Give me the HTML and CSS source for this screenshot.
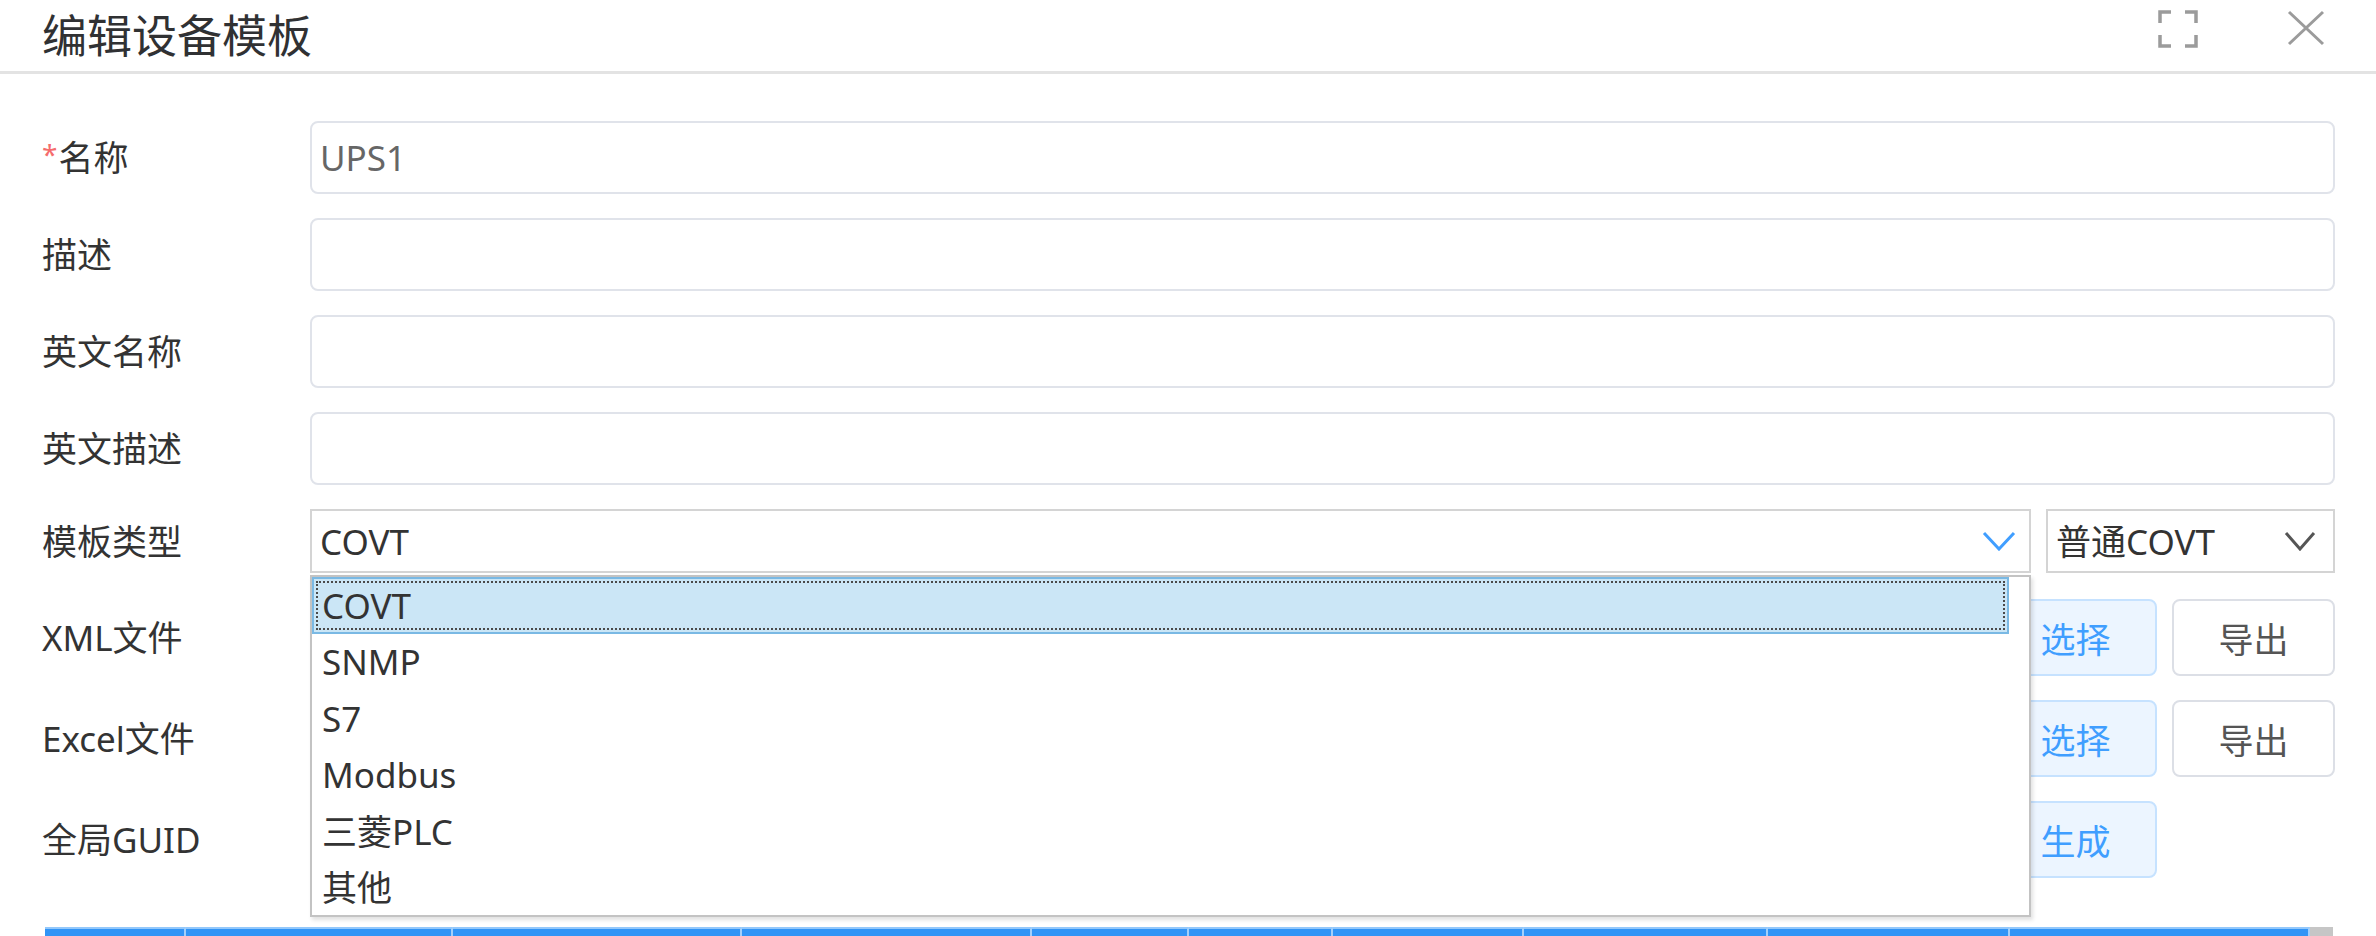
FILE: index.html
```html
<!DOCTYPE html>
<html>
	<head>
		<meta charset="UTF-8">
		<title>编辑设备模板</title>
		<link rel="stylesheet" href="styles.css">
	</head>
	<body>
		<div class="dialog">
			<div class="dialog-header">
				<span class="dialog-title">编辑设备模板</span>
				<div class="header-tools">
					<!-- 全屏 -->
					<svg class="tool-icon" width="40" height="38" viewBox="0 0 40 38">
						<path d="M2 13V2h11M27 2h11v11M38 25v11H27M13 36H2V25" fill="none" stroke="#9b9b9b" stroke-width="3.5"/>
					</svg>
					<!-- 关闭 -->
					<svg class="tool-icon" width="38" height="36" viewBox="0 0 38 36">
						<path d="M2 2L36 34M36 2L2 34" fill="none" stroke="#9b9b9b" stroke-width="3"/>
					</svg>
				</div>
			</div>
			<div class="dialog-body">
				<form class="form">
					<div class="form-item">
						<label class="form-label"><span class="req">*</span>名称</label>
						<div class="form-content"><input class="input" type="text" value="UPS1"></div>
					</div>
					<div class="form-item">
						<label class="form-label">描述</label>
						<div class="form-content"><input class="input" type="text"></div>
					</div>
					<div class="form-item">
						<label class="form-label">英文名称</label>
						<div class="form-content"><input class="input" type="text"></div>
					</div>
					<div class="form-item">
						<label class="form-label">英文描述</label>
						<div class="form-content"><input class="input" type="text"></div>
					</div>
					<div class="form-item select-item">
						<label class="form-label">模板类型</label>
						<div class="form-content">
							<div class="select select-main">
								<span>COVT</span>
								<svg width="34" height="20" viewBox="0 0 34 20"><path d="M2 2L17 18L32 2" fill="none" stroke="#409eff" stroke-width="3"/></svg>
								<!-- 下拉列表 -->
								<ul class="dropdown">
									<li class="option active">COVT</li>
									<li class="option">SNMP</li>
									<li class="option">S7</li>
									<li class="option">Modbus</li>
									<li class="option">三菱PLC</li>
									<li class="option">其他</li>
								</ul>
							</div>
							<div class="select select-sub">
								<span>普通COVT</span>
								<svg width="32" height="20" viewBox="0 0 32 20"><path d="M2 2L16 18L30 2" fill="none" stroke="#555" stroke-width="3"/></svg>
							</div>
						</div>
					</div>
					<div class="form-item btn-item">
						<label class="form-label">XML文件</label>
						<div class="form-content">
							<input class="input" type="text">
							<button type="button" class="btn btn-light">选择</button>
							<button type="button" class="btn">导出</button>
						</div>
					</div>
					<div class="form-item btn-item">
						<label class="form-label">Excel文件</label>
						<div class="form-content">
							<input class="input" type="text">
							<button type="button" class="btn btn-light">选择</button>
							<button type="button" class="btn">导出</button>
						</div>
					</div>
					<div class="form-item btn-item last">
						<label class="form-label">全局GUID</label>
						<div class="form-content">
							<input class="input" type="text">
							<button type="button" class="btn btn-light">生成</button>
							<span class="btn-space"></span>
						</div>
					</div>
				</form>
				<div class="table-head">
					<div class="th"></div>
					<div class="th"></div>
					<div class="th"></div>
					<div class="th"></div>
					<div class="th"></div>
					<div class="th"></div>
					<div class="th"></div>
					<div class="th"></div>
					<div class="th"></div>
					<div class="th"></div>
					<div class="th gutter"></div>
				</div>
			</div>
		</div>
	</body>
</html>
```
FILE: styles.css
```css
* {
	margin: 0;
	padding: 0;
	box-sizing: border-box;
}
html,
body {
	height: 100%;
}
body {
	font-family: "Noto Sans", "Noto Sans CJK SC", sans-serif;
	color: #333;
	background: #fff;
	overflow: hidden;
}
ul {
	list-style: none;
}
.dialog {
	height: 936px;
	overflow: hidden;
}
.dialog-header {
	display: flex;
	align-items: center;
	height: 74px;
	padding: 0 51px 0 42px;
	border-bottom: 3px solid #e3e3e3;
}
.dialog-title {
	flex: 1;
	font-size: 45px;
	line-height: 1;
	color: #303133;
}
.header-tools {
	display: flex;
	align-self: flex-start;
	margin-top: 10px;
	gap: 89px;
}
.tool-icon {
	display: block;
}
.form {
	padding: 47px 41px 0 42px;
}
.form-item {
	display: flex;
	align-items: center;
	height: 73px;
	margin-bottom: 24px;
}
.form-item.last {
	margin-bottom: 0;
}
.form-label {
	width: 268px;
	flex-shrink: 0;
	font-size: 35px;
	line-height: 1;
	color: #333;
}
.req {
	display: inline-block;
	vertical-align: top;
	font-size: 28px;
	line-height: 1;
	color: #f56c6c;
	margin-right: 1px;
}
.form-content {
	flex: 1;
	display: flex;
	gap: 15px;
	height: 100%;
	position: relative;
}
.input {
	flex: 1;
	min-width: 0;
	height: 100%;
	border: 2px solid #e0e3ea;
	border-radius: 8px;
	padding: 0 8px;
	font-family: inherit;
	font-size: 35px;
	color: #666;
	background: #fff;
	outline: none;
}
.select-item {
	height: 64px;
	margin-bottom: 26px;
}
.select {
	position: relative;
	display: flex;
	align-items: center;
	justify-content: space-between;
	height: 100%;
	border: 2px solid #d4d4d4;
	padding: 0 13px 0 8px;
	font-size: 35px;
	line-height: 1;
	color: #333;
	background: #fff;
}
.select-main {
	flex: 1;
}
.select-sub {
	width: 289px;
	padding-right: 17px;
}
.select svg {
	display: block;
}
.dropdown {
	position: absolute;
	top: 64px;
	left: -2px;
	right: -2px;
	height: 342px;
	padding-right: 20px;
	border: 2px solid #c3c3c3;
	background: #fff;
	box-shadow: 2px 3px 4px rgba(0, 0, 0, 0.12);
	z-index: 10;
}
.option {
	display: flex;
	align-items: center;
	height: 56.5px;
	padding-left: 10px;
	font-size: 35px;
	line-height: 1;
	color: #333;
}
.option.active {
	padding-left: 8px;
	background: #cbe6f6;
	border: 2px solid #7ab9e4;
	outline: 2px dotted #4a4a4a;
	outline-offset: -6px;
}
.btn-item {
	height: 77px;
}
.btn {
	width: 163px;
	flex-shrink: 0;
	height: 100%;
	border: 2px solid #dcdfe6;
	border-radius: 8px;
	background: #fff;
	font-family: inherit;
	font-size: 35px;
	color: #555;
}
.btn-light {
	background: #ecf5ff;
	border-color: #c6e2ff;
	color: #409eff;
}
.btn-space {
	width: 163px;
	flex-shrink: 0;
}
.table-head {
	display: grid;
	grid-template-columns: 141px 267px 289px 290px 157px 144px 191px 244px 242px 300px 23px;
	height: 60px;
	margin: 49px 43px 0 45px;
}
.th {
	background: #3194f6;
	border-top: 2px solid #93c8fb;
	border-right: 2px solid #a3cffa;
}
.th.gutter {
	background: #c6c6c6;
	border: none;
}
```
